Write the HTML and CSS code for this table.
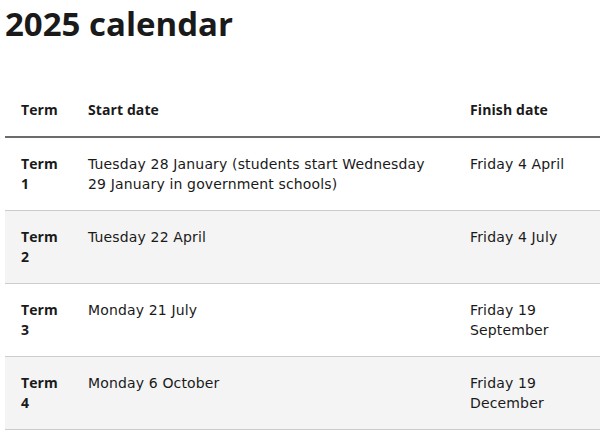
FILE: index.html
```html
<!DOCTYPE html>
<html lang="en">
<head>
<meta charset="utf-8">
<title>2025 calendar</title>
<link rel="stylesheet" href="styles.css">
</head>
<body>
<main class="page">
  <h1 class="title">2025 calendar</h1>
  <table class="cal">
    <colgroup>
      <col class="c-term">
      <col class="c-start">
      <col class="c-finish">
    </colgroup>
    <thead>
      <tr>
        <th>Term</th>
        <th>Start date</th>
        <th>Finish date</th>
      </tr>
    </thead>
    <tbody>
      <tr>
        <th>Term 1</th>
        <td>Tuesday 28 January (students start Wednesday 29 January in government schools)</td>
        <td>Friday 4 April</td>
      </tr>
      <tr>
        <th>Term 2</th>
        <td>Tuesday 22 April</td>
        <td>Friday 4 July</td>
      </tr>
      <tr>
        <th>Term 3</th>
        <td>Monday 21 July</td>
        <td>Friday 19 September</td>
      </tr>
      <tr>
        <th>Term 4</th>
        <td>Monday 6 October</td>
        <td>Friday 19 December</td>
      </tr>
    </tbody>
  </table>
</main>
</body>
</html>
```
FILE: styles.css
```css
html, body {
  margin: 0;
  padding: 0;
  background: #ffffff;
}
body {
  font-family: "DejaVu Sans", "Liberation Sans", sans-serif;
  color: #1a1a1a;
}
.page {
  padding: 4px 9px 0 5px;
}
.title {
  margin: 0 0 40px 0;
  font-family: "Open Sans", "DejaVu Sans", sans-serif;
  font-size: 33px;
  line-height: 40px;
  font-weight: 700;
  color: #1a1a1a;
}
.cal {
  width: 595px;
  table-layout: fixed;
  border-collapse: collapse;
  font-size: 14px;
  line-height: 20px;
  letter-spacing: 0.15px;
}
.c-term { width: 67px; }
.c-start { width: 382px; }
.c-finish { width: 146px; }
.cal th, .cal td {
  padding: 16px;
  text-align: left;
  vertical-align: top;
}
.cal th {
  font-family: "Open Sans", "DejaVu Sans", sans-serif;
  font-weight: 700;
  letter-spacing: 0.1px;
}
.cal thead th {
  border-bottom: 2px solid #6b6b6b;
}
.cal tbody tr {
  border-bottom: 1px solid #cccccc;
}
.cal tbody td {
  font-weight: 400;
}
.cal tbody tr:nth-child(even) {
  background: #f4f4f4;
}
```
